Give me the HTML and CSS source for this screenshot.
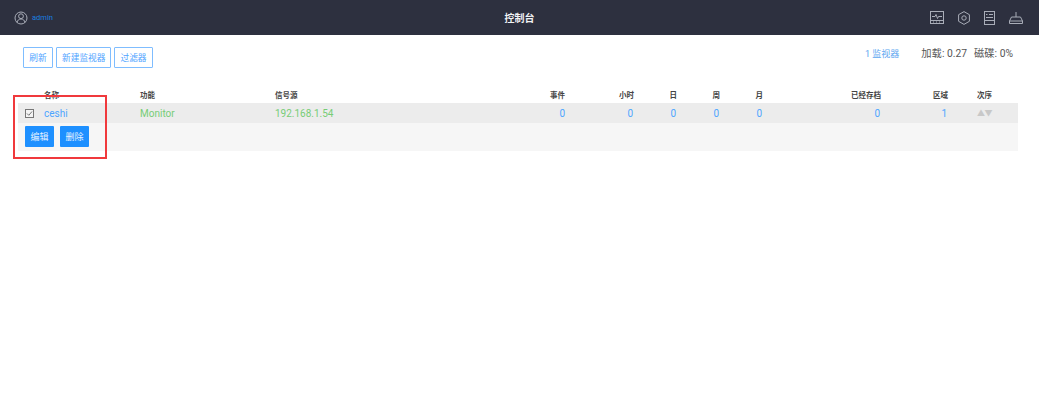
FILE: index.html
```html
<!DOCTYPE html>
<html lang="zh">
<head>
<meta charset="utf-8">
<title>控制台</title>
<link rel="stylesheet" href="styles.css">
</head>
<body>
<header class="topbar">
  <div class="user">
    <svg class="user-icon" viewBox="0 0 14 14" width="14" height="14" fill="none" stroke="#a9adb8" stroke-width="1">
      <circle cx="7" cy="7" r="6"/><circle cx="7" cy="5.2" r="2.4"/><path d="M3 11.6c.4-2.4 2-3.6 4-3.6s3.600 1.200 4 3.600"/>
    </svg>
    <span class="user-name">admin</span>
  </div>
  <h1 class="title">控制台</h1>
  <nav class="tools">
    <svg viewBox="0 0 14 13" width="14" height="13" fill="none" stroke="#a9adb8"><rect x=".5" y=".5" width="13" height="12"/><path d="M.5 9.500h13M2 5.500h3l1-2 1.500 4 1-2H12M3 11h1M6 11h1M9 11h1"/></svg>
    <svg viewBox="0 0 12 14" width="12" height="14" fill="none" stroke="#a9adb8"><path d="M6 .6l5.400 3.100v6.600L6 13.400.6 10.300V3.700z"/><circle cx="6" cy="7" r="2.200"/></svg>
    <svg viewBox="0 0 11 14" width="11" height="14" fill="none" stroke="#a9adb8"><rect x=".5" y=".5" width="10" height="13"/><path d="M.5 9.500h10M2 3.500h1.500M5 3.500h4M2 6.500h7"/></svg>
    <svg viewBox="0 0 14 12" width="14" height="12" fill="none" stroke="#a9adb8"><path d="M7 0v5M2.500 5h9l2 4v2.500H.5V9zM.5 9h13"/></svg>
  </nav>
</header>

<main class="content">
  <div class="toolbar">
    <div class="buttons">
      <button class="btn-outline">刷新</button>
      <button class="btn-outline">新建监视器</button>
      <button class="btn-outline">过滤器</button>
    </div>
    <div class="stats">
      <span class="monitors">1 监视器</span>
      <span class="stat">加载: 0.27</span>
      <span class="stat">磁碟: 0%</span>
    </div>
  </div>

  <table class="monitor-table">
    <thead>
      <tr>
        <th class="c-check"></th>
        <th class="c-name">名称</th>
        <th class="c-func">功能</th>
        <th class="c-source">信号源</th>
        <th class="num c-events">事件</th>
        <th class="num c-hour">小时</th>
        <th class="num c-day">日</th>
        <th class="num c-week">周</th>
        <th class="num c-month">月</th>
        <th class="num c-archive">已经存档</th>
        <th class="num c-zone">区域</th>
        <th class="c-order">次序</th>
      </tr>
    </thead>
    <tbody>
      <tr class="row-main">
        <td><span class="checkbox"><svg viewBox="0 0 9 9" width="9" height="9" fill="#f4f4f4" stroke="#777"><rect x=".5" y=".5" width="8" height="8"/><path fill="none" d="M2 4.500l1.800 1.800L7 2.500"/></svg></span></td>
        <td class="link">ceshi</td>
        <td class="ok">Monitor</td>
        <td class="ok">192.168.1.54</td>
        <td class="num link">0</td>
        <td class="num link">0</td>
        <td class="num link">0</td>
        <td class="num link">0</td>
        <td class="num link">0</td>
        <td class="num link">0</td>
        <td class="num link">1</td>
        <td class="order"><span class="arrows">▲▼</span></td>
      </tr>
      <tr class="row-actions">
        <td colspan="12">
          <div class="actions">
            <button class="btn-solid">编辑</button>
            <button class="btn-solid">删除</button>
          </div>
        </td>
      </tr>
    </tbody>
  </table>
  <div class="highlight"></div>
</main>
</body>
</html>
```
FILE: styles.css
```css
* { box-sizing: border-box; }
html, body { margin: 0; padding: 0; background: #fff; }
body {
  font-family: "Roboto", "Noto Sans CJK SC", sans-serif;
  font-size: 10px;
  color: #555;
}
button { font-family: inherit; cursor: pointer; }

.topbar {
  height: 35px;
  background: #2d303f;
  display: flex;
  align-items: center;
  justify-content: space-between;
  padding: 0 14px 0 14px;
  position: relative;
}
.user { display: flex; align-items: center; gap: 4px; }
.user-icon { display: block; }
.user-name { font-size: 7.5px; color: #1a7fe0; }
.title {
  position: absolute;
  left: 0;
  right: 0;
  margin: 0;
  text-align: center;
  font-size: 10px;
  font-weight: 700;
  color: #f2f3f5;
  pointer-events: none;
}
.tools { display: flex; align-items: center; gap: 14px; padding-right: 2px; }
.tools svg { display: block; }

.content {
  position: relative;
  min-height: 366px;
  padding: 12px 21px 0 18px;
}
.toolbar {
  display: flex;
  justify-content: space-between;
  padding-left: 5px;
  height: 41px;
}
.buttons { display: flex; gap: 3px; height: 21px; }
.btn-outline {
  height: 21px;
  min-width: 30px;
  padding: 0 5px;
  background: #fff;
  border: 1px solid #7fbdff;
  border-radius: 1px;
  font-size: 8.700px;
  color: #4fa3ff;
}
.stats {
  display: flex;
  gap: 7px;
  padding-right: 5px;
  font-size: 10.300px;
  line-height: 14px;
}
.monitors { color: #5aa5f0; font-size: 9px; margin-right: 15px; }
.stat { color: #555; }

.monitor-table {
  width: 1000px;
  table-layout: fixed;
  border-collapse: collapse;
}
.monitor-table th {
  height: 15px;
  padding: 0 0 3px;
  font-size: 7.500px;
  font-weight: 700;
  color: #444;
  text-align: left;
}
.monitor-table td { padding: 0; }
.monitor-table .num { text-align: right; }
.monitor-table td.num { padding-right: 1px; }
.monitor-table th.c-events { padding-right: 1px; }
.c-check { width: 26px; }
.c-name { width: 96px; }
.c-func { width: 135px; }
.c-source { width: 190px; }
.c-events { width: 101px; }
.c-hour { width: 68px; }
.c-day { width: 43px; }
.c-week { width: 43px; }
.c-month { width: 43px; }
.c-archive { width: 118px; }
.c-zone { width: 67px; }
.monitor-table .c-order { width: 70px; padding-left: 29px; }

.row-main { height: 20px; background: #ececec; font-size: 10px; }
.row-actions { height: 28px; background: #f6f6f6; }
.checkbox { display: block; padding-left: 7px; }
.checkbox svg { display: block; }
.link { color: #4ea5ff; }
.ok { color: #77cc77; }
.monitor-table .order { padding-left: 29px; padding-bottom: 2px; }
.arrows { font-size: 8px; color: #c8c8c8; letter-spacing: -.5px; }

.actions { display: flex; gap: 6px; padding: 0 0 1px 7px; }
.btn-solid {
  width: 29px;
  height: 21px;
  padding: 0;
  background: #1e90ff;
  border: 0;
  border-radius: 1px;
  font-size: 9px;
  color: #e6f2ff;
}

.highlight {
  position: absolute;
  left: 13px;
  top: 60px;
  width: 94px;
  height: 64px;
  border: 2px solid #f0393c;
  pointer-events: none;
}
```
